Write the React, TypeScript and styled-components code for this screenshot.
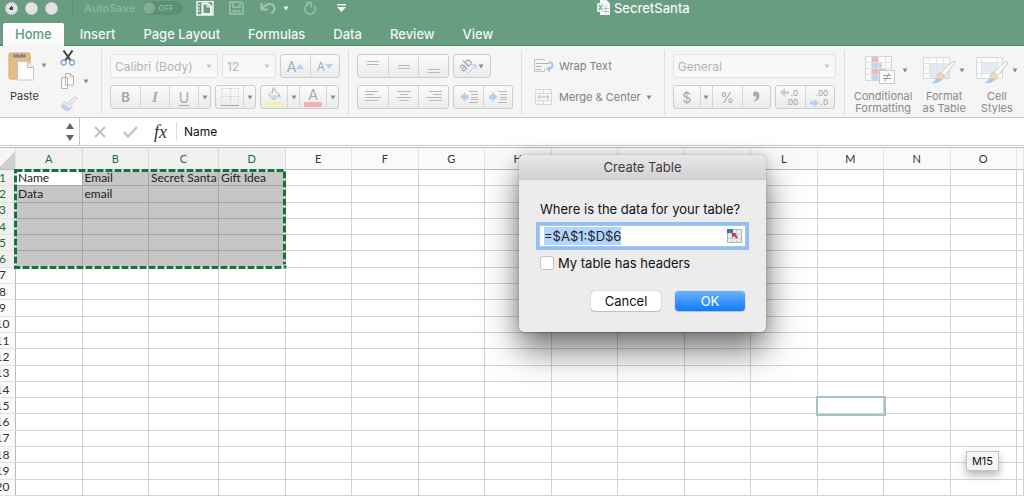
import React, { useEffect, useRef } from "react";
import styled, { createGlobalStyle } from "styled-components";

const GlobalStyle = createGlobalStyle`
  *, *::before, *::after { box-sizing: border-box; }
  html, body { margin: 0; height: 100%; }
  body { overflow: hidden; background: #fff; }
  button, input, select { font: inherit; color: inherit; margin: 0; }
  svg { display: block; flex: none; }
`;

const Page = styled.div`
  position: relative;
  display: flex;
  flex-direction: column;
  height: 100vh;
  overflow: hidden;
  font-family: Inter, "Liberation Sans", sans-serif;
  font-size: 11px;
  color: #222;
`;

/* ---------- window header ---------- */

const Header = styled.header`
  background: #689d82;
  border-bottom: 1px solid #4d8c6b;
  color: #f4f8f5;
`;

const TitleBar = styled.div`
  display: flex;
  align-items: center;
  height: 16px;
  margin-bottom: 7px;
`;

const QuickAccess = styled.div`
  display: flex;
  align-items: center;
  flex: 0 0 58%;
  padding-left: 5px;
`;

const WindowDot = styled.button<{ $edited?: boolean }>`
  width: 13px;
  height: 13px;
  margin-right: 7px;
  padding: 0;
  border: 1px solid #cfd4d1;
  border-radius: 50%;
  background: radial-gradient(circle, ${(p) => (p.$edited ? "#444 0 2px, " : "")}#e3e3e3 2px);
`;

const AutoSave = styled.label`
  display: flex;
  align-items: center;
  gap: 7px;
  margin: 0 14px 0 7px;
  padding-left: 11px;
  border-left: 1px solid #5e9076;
  font-size: 11px;
  font-weight: 600;
  line-height: 16px;
  color: #8bb49d;
`;

const Switch = styled.span`
  display: flex;
  align-items: center;
  gap: 3px;
  width: 40px;
  height: 14px;
  padding-left: 1px;
  border-radius: 7px;
  background: #5b9075;
  font-size: 8px;
  &::before {
    content: "";
    width: 12px;
    height: 12px;
    border-radius: 50%;
    background: #82ab95;
  }
`;

const HiddenCheck = styled.input`
  position: absolute;
  opacity: 0;
  pointer-events: none;
`;

const IconButton = styled.button<{ $gap?: number }>`
  display: flex;
  align-items: center;
  gap: 7px;
  padding: 0;
  margin-right: ${(p) => p.$gap ?? 0}px;
  border: 0;
  background: none;
`;

const DocTitle = styled.h1`
  display: flex;
  align-items: center;
  gap: 4px;
  margin: 0;
  padding-left: 3px;
  font-size: 13px;
  font-weight: 500;
  line-height: 16px;
`;

const Tabs = styled.nav`
  display: flex;
  gap: 4px;
  padding-left: 3px;
`;

const Tab = styled.a<{ $active?: boolean }>`
  padding: 0 12px;
  border-radius: 2px 2px 0 0;
  font-size: 13px;
  font-weight: 500;
  line-height: 22px;
  text-decoration: none;
  color: ${(p) => (p.$active ? "#5f9b7b" : "#f1f6f3")};
  background: ${(p) => (p.$active ? "linear-gradient(#fff, #f7f7f7)" : "none")};
  box-shadow: ${(p) => (p.$active ? "0 1px #f7f7f7" : "none")};
`;

/* ---------- ribbon ---------- */

const Ribbon = styled.section`
  display: flex;
  padding: 4px 0 3px;
  background: #f5f5f5;
  border-bottom: 1px solid #c6c6c6;
  overflow: hidden;
`;

const Group = styled.div<{ $pad?: number }>`
  display: flex;
  flex-direction: column;
  flex: none;
  gap: 7px;
  padding: 4px ${(p) => p.$pad ?? 8}px 0;
  border-right: 1px solid #dedede;
`;

const Clipboard = styled(Group)`
  flex-direction: row;
  gap: 13px;
  padding: 0 12px 0 2px;
`;

const Line = styled.div`
  display: flex;
  gap: 4px;
`;

const ButtonSet = styled.div`
  display: flex;
  height: 24px;
  border: 1px solid #cdcdcd;
  border-radius: 3px;
  background: linear-gradient(#fbfbfb, #ebebeb);
`;

const Seg = styled.button<{ $w?: number }>`
  display: flex;
  align-items: center;
  justify-content: center;
  width: ${(p) => p.$w ?? 30}px;
  padding: 0;
  border: 0;
  border-left: 1px solid #d6d6d6;
  background: none;
  color: #a9a9a9;
  font-size: 14px;
  &:first-child { border-left: 0; }
`;

const Bold = styled.b`font-size: 13px;`;
const Italic = styled.i`font-family: "Liberation Serif", serif; font-size: 15px; font-weight: 700;`;
const Underline = styled.u`text-underline-offset: 2px;`;
const Small = styled.span`font-size: 12px;`;

const Picker = styled.div<{ $w: number }>`
  position: relative;
  width: ${(p) => p.$w}px;
  height: 24px;
  border: 1px solid #e2e2e2;
  border-radius: 3px;
  background: #f8f8f8;
  & > svg { position: absolute; right: 5px; top: 9px; }
`;

const PickerSelect = styled.select`
  width: 100%;
  height: 100%;
  padding: 0 16px 0 4px;
  border: 0;
  appearance: none;
  background: none;
  color: #b4b4b4;
  font-size: 12px;
`;

const TextCommand = styled.button`
  display: flex;
  align-items: center;
  gap: 5px;
  height: 24px;
  padding: 0;
  border: 0;
  background: none;
  color: #808080;
`;

const TallButton = styled.button<{ $dark?: boolean }>`
  display: flex;
  flex-direction: column;
  align-items: center;
  gap: ${(p) => (p.$dark ? 9 : 6)}px;
  padding: 0;
  border: 0;
  background: none;
  color: ${(p) => (p.$dark ? "#3c3c3c" : "#8a8a8a")};
  line-height: 12px;
`;

const IconWithCaret = styled.span<{ $tight?: boolean }>`
  display: flex;
  align-items: center;
  gap: ${(p) => (p.$tight ? 3 : 7)}px;
  padding-left: ${(p) => (p.$tight ? 0 : 6)}px;
`;

const SmallTools = styled.div`
  display: flex;
  flex-direction: column;
  gap: 7px;
`;

const StyleTools = styled.div`
  display: flex;
  flex: none;
  align-items: flex-start;
  gap: 10px;
  padding: 6px 0 0 9px;
`;

/* ---------- formula bar ---------- */

const FormulaBar = styled.div`
  display: flex;
  align-items: center;
  height: 28px;
  background: #fff;
  border-bottom: 1px solid #c9c9c9;
`;

const NameBox = styled.div`
  display: flex;
  align-items: center;
  justify-content: flex-end;
  align-self: stretch;
  width: 80px;
  margin-right: 14px;
  padding-right: 5px;
  border-right: 1px solid #c9c9c9;
`;

const NameInput = styled.input`
  flex: 1;
  min-width: 0;
  border: 0;
  background: none;
`;

const FormulaInput = styled.input`
  flex: 1;
  min-width: 0;
  height: 19px;
  padding: 0 7px;
  border: 0;
  border-left: 1px solid #ddd;
  outline: 0;
  color: #111;
  font-size: 12px;
`;

const Fx = styled.i`
  margin: 0 9px 0 16px;
  font-family: "Liberation Serif", serif;
  font-size: 18px;
  line-height: 20px;
  color: #333;
`;

/* ---------- sheet ---------- */

const Sheet = styled.main`
  position: relative;
  flex: 1;
  min-height: 0;
  margin-top: 1px;
  border-top: 1px solid #bdbdbd;
  overflow: hidden;
`;

const Grid = styled.table`
  width: calc(100% + 9px);
  height: 100%;
  margin-left: -9px;
  table-layout: fixed;
  border-spacing: 0;
  font-family: Lato, "Noto Sans", sans-serif;
  font-size: 12px;
  line-height: 14px;
`;

const ColHead = styled.th<{ $on?: boolean }>`
  height: 22px;
  padding: 0;
  border-right: 1px solid ${(p) => (p.$on ? "#dadada" : "#e4e4e4")};
  border-bottom: 1px solid #bcbcbc;
  background: ${(p) => (p.$on ? "#f0f0f0" : "#fafafa")};
  color: ${(p) => (p.$on ? "#1f6b41" : "#333")};
  font-size: 11px;
  font-weight: 400;
`;

const Corner = styled(ColHead)`
  background: linear-gradient(135deg, #f5f5f5 62%, #cfcfcf 62%);
`;

const RowHead = styled.th<{ $on?: boolean }>`
  padding: 0 1px 0 0;
  border-right: 1px solid #bcbcbc;
  border-bottom: 1px solid #e2e2e2;
  background: ${(p) => (p.$on ? "#f0f0f0" : "#fafafa")};
  color: ${(p) => (p.$on ? "#1f6b41" : "#333")};
  font-weight: 400;
  text-align: center;
`;

const Cell = styled.td<{ $sel?: boolean; $first?: boolean; $target?: boolean }>`
  padding: 0 0 0 2px;
  border-right: 1px solid ${(p) => (p.$sel ? "#a4a4a4" : "#d2d2d2")};
  border-bottom: 1px solid ${(p) => (p.$sel ? "#a4a4a4" : "#d2d2d2")};
  background: ${(p) => (p.$first ? "#fff" : p.$sel ? "#c6c6c6" : "#fff")};
  outline: ${(p) => (p.$target ? "2px solid #a6c5b2" : "none")};
  color: #222;
  white-space: nowrap;
`;

const Ants = styled.svg`
  position: absolute;
  left: 13px;
  top: 20px;
  width: 275px;
  height: 102px;
`;

const CellTip = styled.output`
  position: absolute;
  right: 25px;
  bottom: 25px;
  padding: 0 5px;
  border: 1px solid #c4c4c4;
  background: #f4f4f4;
  box-shadow: 0 4px 9px rgba(0, 0, 0, 0.3);
  color: #111;
  font-size: 11px;
  line-height: 18px;
`;

/* ---------- dialog ---------- */

const Dialog = styled.form`
  position: absolute;
  left: 519px;
  top: 155px;
  width: 247px;
  border-radius: 5px;
  background: #ececec;
  box-shadow: 0 0 1px rgba(0, 0, 0, 0.5), 0 18px 34px rgba(0, 0, 0, 0.55), 0 0 12px rgba(0, 0, 0, 0.15);
  color: #111;
  font-size: 13px;
`;

const DialogTitle = styled.h2`
  margin: 0;
  border-bottom: 1px solid #c8c6c8;
  border-radius: 5px 5px 0 0;
  background: linear-gradient(#e9e7e9, #d3d1d3);
  color: #3d3d3d;
  font-size: 13px;
  font-weight: 400;
  line-height: 24px;
  text-align: center;
`;

const DialogBody = styled.div`
  display: flex;
  flex-direction: column;
  padding: 20px 21px 21px;
`;

const FieldLabel = styled.label`
  line-height: 18px;
  margin-bottom: 8px;
  white-space: nowrap;
`;

const RangeField = styled.div`
  display: flex;
  align-items: center;
  height: 20px;
  padding-right: 3px;
  background: #fff;
  box-shadow: 0 0 0 1px #a9c7ea, 0 0 0 4px #93c0f2;
`;

const RangeInput = styled.input`
  flex: 1;
  min-width: 0;
  height: 18px;
  padding: 0 4px;
  border: 0;
  outline: 0;
  background: none;
  line-height: 18px;
  &::selection { background: #b1d6fd; color: #222; }
`;

const CheckLabel = styled.label`
  display: flex;
  align-items: center;
  gap: 4px;
  margin: 8px 0 19px;
  line-height: 18px;
`;

const Check = styled.input`
  appearance: none;
  width: 14px;
  height: 14px;
  border: 1px solid #c3c3c3;
  border-radius: 3px;
  background: #fff;
`;

const Actions = styled.div`
  display: flex;
  justify-content: flex-end;
  gap: 14px;
`;

const DialogButton = styled.button<{ $primary?: boolean }>`
  width: 70px;
  height: 20px;
  padding: 0;
  border: 0;
  border-radius: 4px;
  background: ${(p) => (p.$primary ? "linear-gradient(#6bb3fa, #0f7bfd)" : "#fff")};
  box-shadow: 0 0 1px rgba(0, 0, 0, 0.5), 0 1px 1px rgba(0, 0, 0, 0.15);
  color: ${(p) => (p.$primary ? "#fff" : "#111")};
  line-height: 20px;
`;

/* ---------- drawings ---------- */

const Caret = ({ color = "#8a8a8a" }: { color?: string }) => (
  <svg width="6" height="5" viewBox="0 0 6 5">
    <path d="M.5.5h5L3 4.5z" fill={color} />
  </svg>
);

const Lines = ({ rows }: { rows: [number, number, number][] }) => (
  <svg width="18" height="16" viewBox="0 0 18 16" stroke="#b9b9b9">
    {rows.map(([x, y, w]) => (
      <path key={y} d={`M${x} ${y}.5h${w}`} />
    ))}
  </svg>
);

const SizeMark = ({ down }: { down?: boolean }) => (
  <svg width="8" height="5" viewBox="0 0 8 5">
    <path d={down ? "M0 0h8L4 5z" : "M0 5h8L4 0z"} fill="#b3d0ec" />
  </svg>
);

const PasteIcon = () => (
  <svg width="26" height="31" viewBox="0 0 26 31">
    <rect x="1" y="3" width="21" height="26" rx="1.5" fill="#e5bd83" stroke="#d3a664" />
    <path d="M5 7.500V4.500h3.500a3.500 3.500 0 0 1 6 0H18v3z" fill="#858585" />
    <circle cx="11.500" cy="4" r="1" fill="#e5e5e5" />
    <path d="M9.500 11.500h10l6 6v12.500h-16z" fill="#fff" stroke="#c5c5c5" />
    <path d="M19.500 11.500v6h6" fill="#eee" stroke="#bbb" />
  </svg>
);

const CutIcon = () => (
  <svg width="16" height="16" viewBox="0 0 16 16" fill="none">
    <path d="M3.500 0.500L11 11M12.500 0.500L5 11" stroke="#444" strokeWidth="2" />
    <circle cx="3.500" cy="12.500" r="2.500" stroke="#79a9dc" strokeWidth="1.300" />
    <circle cx="12" cy="12.500" r="2.500" stroke="#79a9dc" strokeWidth="1.300" />
  </svg>
);

const CopyIcon = () => (
  <svg width="16" height="16" viewBox="0 0 16 16" fill="#fafafa" stroke="#b4b4b4">
    <path d="M1.500 4.500h6v11h-6z M5.500 0.500h5l3 3v8.500h-8z" />
    <path d="M10.500.5v3h3" fill="none" />
  </svg>
);

const BrushIcon = () => (
  <svg width="18" height="16" viewBox="0 0 18 16">
    <path d="M9 6l5-4.500q2-1.500 2.500 0 .5 1-1 2.500L11.500 8z" fill="#f2f2f2" stroke="#c9c9c9" />
    <path d="M5 5.500l7.500 5-1.500 2.500-8-5z" fill="#ececec" stroke="#cfcfcf" />
    <path d="M3 8l8 5-3 2.500Q3 14 .5 9.500z" fill="#bcd2e8" />
  </svg>
);

const BordersIcon = () => (
  <svg width="20" height="20" viewBox="0 0 20 20" fill="none" stroke="#cfcfcf">
    <path d="M1.500 1v17M10.500 1v17M18.500 1v17M1 1.500h18M1 9.500h18" strokeDasharray="1 1" />
    <path d="M1 18.500h18" stroke="#ababab" />
  </svg>
);

const FillIcon = () => (
  <svg width="18" height="20" viewBox="0 0 18 20">
    <path d="M4 7.500l5-5 5.500 5.500-5.500 5L3.500 8z" fill="#f5f5f5" stroke="#b9b9b9" />
    <path d="M7.500 6V1.500q1.500-1.500 2.500 0V4" fill="none" stroke="#b9b9b9" />
    <path d="M4.500 8h9.500L9 12.500z" fill="#c9dcef" />
    <path d="M13 6q3 1 2.500 6-2-1-2.500-6z" fill="#a9c9ea" />
    <path d="M0 15h18v5H0z" fill="#f3efb5" />
  </svg>
);

const ColorBox = styled.span`
  display: block;
  width: 18px;
  border-bottom: 5px solid #f1b5b6;
  line-height: 15px;
`;

const AngleIcon = () => (
  <svg width="18" height="18" viewBox="0 0 18 18" overflow="visible">
    <text x="1" y="14" transform="rotate(-45 4 12)" fontSize="12" fill="#9c9c9c">ab</text>
    <path d="M7 17L16 8M12 8h4v4" fill="none" stroke="#a9c9ea" />
  </svg>
);

const IndentIcon = ({ right }: { right?: boolean }) => (
  <svg width="18" height="14" viewBox="0 0 18 14">
    <path d={right ? "M0 5h3V2l5.500 5L3 12V9H0z" : "M8.500 5h-3V2L0 7l5.500 5V9h3z"} fill="#b3d0ec" />
    <path d="M9 1.500h9M11 4.500h7M11 7.500h7M11 9.500h7M9 12.500h9" stroke="#b9b9b9" />
  </svg>
);

const CommaIcon = () => (
  <svg width="8" height="12" viewBox="0 0 8 12">
    <path d="M3.500.5C.5.500 0 5 3 5.500q1 .2 1.500-.3Q4.500 8.500.5 11q7-1.500 7-6.500Q7.300.5 3.500.5z" fill="#a9a9a9" />
  </svg>
);

const WrapIcon = () => (
  <svg width="20" height="14" viewBox="0 0 20 14" fill="none" stroke="#c3c3c3">
    <path d="M10.500 1.500V.5H.5v12h10v-3" />
    <path d="M2 4.500h13M2 7.500h6M2 10.500h5" stroke="#b0b0b0" />
    <path d="M15 3q4 1 3.500 4-.5 2.500-4 3" stroke="#a5c7ea" strokeWidth="2" />
    <path d="M16 6.500v7L12 10z" fill="#a5c7ea" stroke="none" />
  </svg>
);

const MergeIcon = () => (
  <svg width="20" height="16" viewBox="0 0 20 16" fill="none" stroke="#d9d9d9">
    <path d="M1.500.5h16v15h-16zM1.500 4.500h16M1.500 11.500h16M9.500 .5v4M9.500 11.500v4" />
    <path d="M4 8h11M6 6L4 8l2 2M13 6l2 2-2 2" stroke="#9cc3ea" />
  </svg>
);

const DecimalIcon = ({ more }: { more?: boolean }) => (
  <svg width="20" height="19" viewBox="0 0 20 19" fontSize="8" fill="#9a9a9a" textAnchor="end">
    <path d={more ? "M0 13.500h4v-2.500l5 4-5 4v-2.500H0z" : "M9 3.500H5V0L0 4.500l5 4.500V6h4z"} fill="#b3d0ec" />
    <text x="18" y="8">{more ? ".00" : ".0"}</text>
    <text x="18" y="17">{more ? ".0" : ".00"}</text>
  </svg>
);

const ConditionalIcon = () => (
  <svg width="30" height="28" viewBox="0 0 30 28">
    <path d="M.5.5h26v24H.5z" fill="#fcfcfc" stroke="#d4d4d4" />
    <path d="M7 1h6v5H7zM7 12h13v6H7z" fill="#f2b9b7" />
    <path d="M7 6h10v6H7zM7 18h6v6H7z" fill="#bcd8f2" />
    <path d="M.5 6.500h26M.5 12.500h26M.5 18.500h26M6.500.5v24M13.500.5v24M20.500.5v24" stroke="#e2e2e2" fill="none" />
    <path d="M14.500 14.500h15v13h-15z" fill="#fbfbfb" stroke="#c9c9c9" />
    <path d="M18 19.500h8M18 22.500h8M24 17l-4 8" stroke="#9a9a9a" />
  </svg>
);

const TableBrushIcon = ({ solid }: { solid?: boolean }) => (
  <svg width="33" height="28" viewBox="0 0 33 28">
    <path d="M.5 1.500h26v21H.5z" fill="#fcfcfc" stroke="#d9d9d9" />
    <path d={solid ? "M6 6h15v11H6z" : "M7 7h19v15H7z"} fill="#e2ebf4" />
    <path
      d={solid ? "M.5 6.500h26M.5 17.500h26M5.500 1.500v21M21.500 1.500v21" : "M.5 7.500h26M.5 12.500h26M.5 17.500h26M6.500 1.500v21M13.500 1.500v21M20.500 1.500v21"}
      stroke="#e5e5e5"
      fill="none"
    />
    <path d="M16 18L29 6q3-1 3 1L20 22z" fill="#fafafa" stroke="#c9c9c9" />
    <path d="M14 19q3-4 6-1 2 3-1 6-4 1-5-5z" fill="#f0d8b8" stroke="#ddc7a6" />
    <path d="M8 27q4-1 4.500-4.500l6 .5Q17 28 8 27z" fill="#a9c8ee" />
  </svg>
);

const SidebarIcon = () => (
  <svg width="18" height="15" viewBox="0 0 18 15" fill="none" stroke="#f2f7f4">
    <path d="M1 .5h16v13.500H1z" strokeWidth="1.500" />
    <path d="M3 3v9" strokeDasharray="2 1" />
    <path d="M6.500 2.500h5l3.500 3V13H6.500z" strokeWidth="2" />
    <path d="M11 2.500V6h4" />
  </svg>
);

const SaveIcon = () => (
  <svg width="15" height="14" viewBox="0 0 15 14" fill="none" stroke="#91b8a3" strokeWidth="2">
    <path d="M1 1h11.500L14 2.500V13H1z" />
    <path d="M4 1.500v4.500h7V1.500M4.500 13V10h6V13" />
  </svg>
);

const UndoIcon = () => (
  <svg width="16" height="12" viewBox="0 0 16 12" fill="none" stroke="#a2c3b1" strokeWidth="2">
    <path d="M1.500 1v6.500H8M2 7Q6 1.500 10.500 2q4 1 4 5 0 3-3.500 4" />
  </svg>
);

const RedoIcon = () => (
  <svg width="14" height="14" viewBox="0 0 14 14" fill="none" stroke="#91b8a3" strokeWidth="2">
    <path d="M11.500 5a5.200 5.200 0 1 1-8-.8L7 1.500" />
    <path d="M3 1.500h5v5" />
  </svg>
);

const MoreIcon = () => (
  <svg width="9" height="8" viewBox="0 0 9 8" fill="#f2f7f4">
    <path d="M0 0h9v1.500H0zM0 3h9L4.500 8z" />
  </svg>
);

const BookIcon = () => (
  <svg width="13" height="16" viewBox="0 0 13 16">
    <path d="M3 0h6.500L13 3.500V15H3z" fill="#f7f9f8" />
    <path d="M9 5v9M6 11.500h6M6 8.500h6" stroke="#a5c8b4" />
    <path d="M0 3h7v9H0z" fill="#dfe9e3" />
    <path d="M2 5l3 5M5 5l-3 5" stroke="#689d82" />
  </svg>
);

const PickRangeIcon = () => (
  <svg width="15" height="14" viewBox="0 0 15 14">
    <path d="M.5.500h14v13H.5z" fill="#e9eff6" stroke="#a9b4c2" />
    <path d="M5 1v12M10 1v12M1 5h13M1 9.500h13" stroke="#c5cfdb" />
    <path d="M0 0h6v4H0z" fill="#3b6fb5" />
    <path d="M5 4h4.500L8.500 5.500l2.500 2.500L9.500 9.500 7 7 5 9z" fill="#cf3b3b" />
  </svg>
);

/* ---------- data ---------- */

const tabs = ["Home", "Insert", "Page Layout", "Formulas", "Data", "Review", "View"];
const columns = "ABCDEFGHIJKLMNO".split("");
const values: Record<string, string> = {
  A1: "Name", B1: "Email", C1: "Secret Santa", D1: "Gift Idea", A2: "Data", B2: "email",
};

const alignRows: Record<string, [number, number, number][]> = {
  Top: [[3, 3, 12], [3, 6, 12]],
  Middle: [[3, 7, 12], [3, 10, 12]],
  Bottom: [[3, 11, 12], [3, 14, 12]],
  Left: [[1, 2, 13], [1, 5, 9], [1, 8, 16], [1, 11, 13]],
  Center: [[2, 2, 14], [5, 5, 8], [2, 8, 14], [4, 11, 10]],
  Right: [[4, 2, 13], [8, 5, 9], [1, 8, 16], [4, 11, 13]],
};

const AlignSet = ({ names }: { names: string[] }) => (
  <ButtonSet>
    {names.map((n) => (
      <Seg key={n} aria-label={`Align ${n}`}><Lines rows={alignRows[n]} /></Seg>
    ))}
  </ButtonSet>
);

const Drop = ({ label, w = 12 }: { label: string; w?: number }) => (
  <Seg $w={w} aria-label={label}><Caret /></Seg>
);

const CreateTable = () => {
  const range = useRef<HTMLInputElement>(null);
  useEffect(() => {
    range.current?.focus();
    range.current?.select();
  }, []);
  return (
    <Dialog role="dialog" aria-labelledby="dlg-title" onSubmit={(e) => e.preventDefault()}>
      <DialogTitle id="dlg-title">Create Table</DialogTitle>
      <DialogBody>
        <FieldLabel htmlFor="range">Where is the data for your table?</FieldLabel>
        <RangeField>
          <RangeInput id="range" ref={range} defaultValue="=$A$1:$D$6" spellCheck={false} />
          <IconButton type="button" aria-label="Select range"><PickRangeIcon /></IconButton>
        </RangeField>
        <CheckLabel>
          <Check type="checkbox" />
          My table has headers
        </CheckLabel>
        <Actions>
          <DialogButton type="button">Cancel</DialogButton>
          <DialogButton type="submit" $primary>OK</DialogButton>
        </Actions>
      </DialogBody>
    </Dialog>
  );
};

export default function App() {
  return (
    <Page>
      <GlobalStyle />
      <Header>
        <TitleBar>
          <QuickAccess>
            <WindowDot $edited aria-label="Close" />
            <WindowDot aria-label="Minimize" />
            <WindowDot aria-label="Zoom" />
            <AutoSave>
              AutoSave
              <HiddenCheck type="checkbox" />
              <Switch>OFF</Switch>
            </AutoSave>
            <IconButton $gap={15} aria-label="Sidebar"><SidebarIcon /></IconButton>
            <IconButton $gap={16} aria-label="Save"><SaveIcon /></IconButton>
            <IconButton $gap={7} aria-label="Undo"><UndoIcon /></IconButton>
            <IconButton $gap={14} aria-label="Undo history"><Caret color="#f2f7f4" /></IconButton>
            <IconButton $gap={20} aria-label="Redo"><RedoIcon /></IconButton>
            <IconButton aria-label="Customize toolbar"><MoreIcon /></IconButton>
          </QuickAccess>
          <DocTitle><BookIcon />SecretSanta</DocTitle>
        </TitleBar>
        <Tabs>
          {tabs.map((t, i) => (
            <Tab key={t} href="#" $active={i === 0}>{t}</Tab>
          ))}
        </Tabs>
      </Header>

      <Ribbon>
        <Clipboard>
          <TallButton $dark>
            <IconWithCaret><PasteIcon /><Caret /></IconWithCaret>
            Paste
          </TallButton>
          <SmallTools>
            <IconButton aria-label="Cut"><CutIcon /></IconButton>
            <IconButton aria-label="Copy"><CopyIcon /><Caret /></IconButton>
            <IconButton aria-label="Format painter"><BrushIcon /></IconButton>
          </SmallTools>
        </Clipboard>

        <Group>
          <Line>
            <Picker $w={108}>
              <PickerSelect aria-label="Font"><option>Calibri (Body)</option></PickerSelect>
              <Caret color="#c4c4c4" />
            </Picker>
            <Picker $w={54}>
              <PickerSelect aria-label="Font size"><option>12</option></PickerSelect>
              <Caret color="#c4c4c4" />
            </Picker>
            <ButtonSet>
              <Seg $w={29} aria-label="Increase font size">A<SizeMark /></Seg>
              <Seg $w={29} aria-label="Decrease font size"><Small>A</Small><SizeMark down /></Seg>
            </ButtonSet>
          </Line>
          <Line>
            <ButtonSet>
              <Seg $w={29} aria-label="Bold"><Bold>B</Bold></Seg>
              <Seg $w={29} aria-label="Italic"><Italic>I</Italic></Seg>
              <Seg $w={29} aria-label="Underline"><Underline>U</Underline></Seg>
              <Drop label="Underline style" />
            </ButtonSet>
            <ButtonSet>
              <Seg $w={27} aria-label="Borders"><BordersIcon /></Seg>
              <Drop label="Border style" />
            </ButtonSet>
            <ButtonSet>
              <Seg $w={26} aria-label="Fill color"><FillIcon /></Seg>
              <Drop label="Fill color options" />
              <Seg $w={27} aria-label="Font color"><ColorBox>A</ColorBox></Seg>
              <Drop label="Font color options" />
            </ButtonSet>
          </Line>
        </Group>

        <Group>
          <Line>
            <AlignSet names={["Top", "Middle", "Bottom"]} />
            <ButtonSet>
              <Seg $w={36} aria-label="Orientation"><AngleIcon /><Caret /></Seg>
            </ButtonSet>
          </Line>
          <Line>
            <AlignSet names={["Left", "Center", "Right"]} />
            <ButtonSet>
              <Seg $w={29} aria-label="Decrease indent"><IndentIcon /></Seg>
              <Seg $w={29} aria-label="Increase indent"><IndentIcon right /></Seg>
            </ButtonSet>
          </Line>
        </Group>

        <Group $pad={12}>
          <TextCommand><WrapIcon />Wrap Text</TextCommand>
          <TextCommand><MergeIcon />Merge &amp; Center<Caret /></TextCommand>
        </Group>

        <Group>
          <Picker $w={163}>
            <PickerSelect aria-label="Number format"><option>General</option></PickerSelect>
            <Caret color="#c4c4c4" />
          </Picker>
          <Line>
            <ButtonSet>
              <Seg $w={26} aria-label="Currency">$</Seg>
              <Drop label="Currency options" />
              <Seg aria-label="Percent">%</Seg>
              <Seg $w={28} aria-label="Comma style"><CommaIcon /></Seg>
            </ButtonSet>
            <ButtonSet>
              <Seg $w={29} aria-label="Increase decimal"><DecimalIcon /></Seg>
              <Seg $w={29} aria-label="Decrease decimal"><DecimalIcon more /></Seg>
            </ButtonSet>
          </Line>
        </Group>

        <StyleTools>
          <TallButton>
            <IconWithCaret><ConditionalIcon /><Caret /></IconWithCaret>
            <span>Conditional<br />Formatting</span>
          </TallButton>
          <TallButton>
            <IconWithCaret $tight><TableBrushIcon /><Caret /></IconWithCaret>
            <span>Format<br />as Table</span>
          </TallButton>
          <TallButton>
            <IconWithCaret $tight><TableBrushIcon solid /><Caret /></IconWithCaret>
            <span>Cell<br />Styles</span>
          </TallButton>
        </StyleTools>
      </Ribbon>

      <FormulaBar>
        <NameBox>
          <NameInput aria-label="Name box" />
          <svg width="8" height="18" viewBox="0 0 8 18" fill="#666"><path d="M0 6h8L4 0zM0 12h8l-4 6z" /></svg>
        </NameBox>
        <IconButton $gap={17} aria-label="Cancel entry">
          <svg width="12" height="12" viewBox="0 0 12 12" stroke="#c2c2c2" strokeWidth="2"><path d="M1 1l10 10M11 1L1 11" /></svg>
        </IconButton>
        <IconButton aria-label="Accept entry">
          <svg width="15" height="12" viewBox="0 0 15 12" fill="none" stroke="#c6c6c6" strokeWidth="2.500"><path d="M1 6l4 4.500L14 1" /></svg>
        </IconButton>
        <Fx>fx</Fx>
        <FormulaInput aria-label="Formula" defaultValue="Name" />
      </FormulaBar>

      <Sheet>
        <Grid>
          <colgroup>
            <col width="25" />
            {columns.map((c) => <col key={c} width={c === "C" ? 70 : undefined} />)}
            <col width="7" />
          </colgroup>
          <thead>
            <tr>
              <Corner />
              {columns.map((c, i) => <ColHead key={c} $on={i < 4}>{c}</ColHead>)}
              <ColHead />
            </tr>
          </thead>
          <tbody>
            {Array.from({ length: 20 }, (_, r) => r + 1).map((r) => (
              <tr key={r}>
                <RowHead $on={r < 7}>{r}</RowHead>
                {columns.map((c, i) => (
                  <Cell key={c} $sel={r < 7 && i < 4} $first={r === 1 && i === 0} $target={c === "M" && r === 15}>
                    {values[c + r]}
                  </Cell>
                ))}
                <Cell />
              </tr>
            ))}
          </tbody>
        </Grid>
        <Ants viewBox="0 0 275 102" fill="none">
          <rect x="2.500" y="2.500" width="269" height="97" stroke="#fff" strokeWidth="2" />
          <rect x="2.500" y="2.500" width="269" height="97" stroke="#14733c" strokeWidth="3" strokeDasharray="7 2" />
          <rect x="270" y="97" width="4" height="4" fill="#14733c" stroke="#fff" />
        </Ants>
        <CellTip>M15</CellTip>
      </Sheet>

      <CreateTable />
    </Page>
  );
}
